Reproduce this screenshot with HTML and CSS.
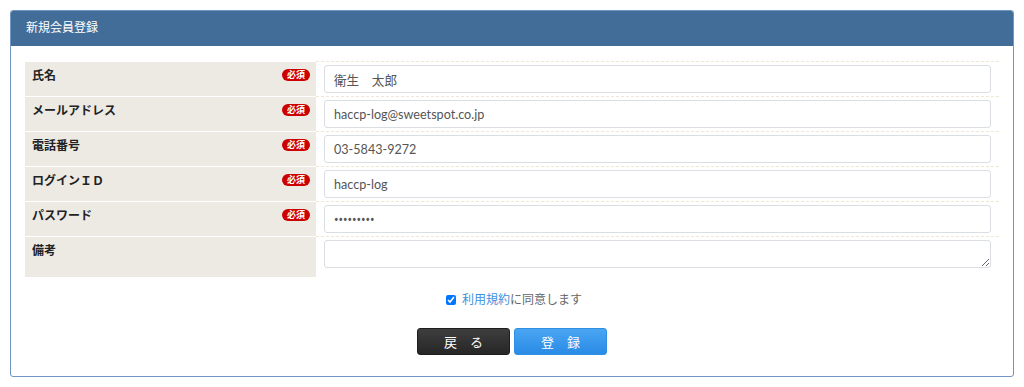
FILE: index.html
```html
<!DOCTYPE html>
<html lang="ja">
<head>
    <meta charset="UTF-8">
    <meta name="viewport" content="width=device-width, initial-scale=1.0">
    <title>新規会員登録</title>
    <link rel="stylesheet" href="styles.css">
</head>
<body>

    <div class="panel">
        <div class="panel-heading">新規会員登録</div>
        <div class="panel-body">
            <table class="form-table">
                <tr>
                    <th><span class="label">氏名</span><span class="required">必須</span></th>
                    <td><input type="text" class="form-control" value="衛生　太郎"></td>
                </tr>
                <tr>
                    <th><span class="label">メールアドレス</span><span class="required">必須</span></th>
                    <td><input type="text" class="form-control" value="haccp-log@sweetspot.co.jp"></td>
                </tr>
                <tr>
                    <th><span class="label">電話番号</span><span class="required">必須</span></th>
                    <td><input type="text" class="form-control" value="03-5843-9272"></td>
                </tr>
                <tr>
                    <th><span class="label">ログインＩＤ</span><span class="required">必須</span></th>
                    <td><input type="text" class="form-control" value="haccp-log"></td>
                </tr>
                <tr>
                    <th><span class="label">パスワード</span><span class="required">必須</span></th>
                    <td><input type="password" class="form-control pass" value="password1"></td>
                </tr>
                <tr class="remarks">
                    <th><span class="label">備考</span></th>
                    <td><textarea class="form-control" rows="1"></textarea></td>
                </tr>
            </table>

            <div class="agree">
                <label><input type="checkbox" checked><a href="#">利用規約</a>に同意します</label>
            </div>

            <div class="buttons">
                <button class="btn btn-back">戻　る</button>
                <button class="btn btn-submit">登　録</button>
            </div>
        </div>
    </div>

</body>
</html>
```

FILE: styles.css
```css
html {
    box-sizing: border-box;
}
*, *:before, *:after {
    box-sizing: inherit;
}
body {
    margin: 10px;
    font-family: "Noto Sans", "Noto Sans CJK JP", sans-serif;
    font-size: 12px;
    color: #333;
    background: #fff;
}
.panel {
    border: 1px solid #7196c1;
    border-radius: 3px;
    overflow: hidden;
}
.panel-heading {
    height: 35px;
    padding: 0 15px;
    line-height: 34px;
    color: #fff;
    font-size: 12px;
    background: #436d99;
}
.panel-body {
    padding: 15px 14px 21px;
}
/* Form table */
.form-table {
    width: 100%;
    border-collapse: collapse;
}
.form-table th {
    width: 291px;
    padding: 5px 6px 0 7px;
    text-align: left;
    vertical-align: top;
    background: #edeae3;
    border-top: 1px solid #fff;
}
.form-table tr:first-child th {
    border-top: 0;
}
.form-table th .label {
    font-weight: bold;
    font-size: 12px;
    line-height: 17px;
    color: #222;
}
.required {
    float: right;
    margin-top: 2px;
    width: 28px;
    height: 12px;
    line-height: 12px;
    border-radius: 6px;
    background: #cc0000;
    color: #fff;
    font-size: 9px;
    font-weight: bold;
    text-align: center;
}
.form-table td {
    padding: 3px 8px 3px 8px;
    border-top: 1px dashed #efe7d4;
}
.form-control {
    display: block;
    width: 100%;
    height: 28px;
    padding: 0 9px;
    font-family: "Lato", "Noto Sans CJK JP", sans-serif;
    font-size: 12.6px;
    color: #555;
    border: 1px solid #dadde2;
    border-radius: 3px;
    background: #fff;
}
.form-control.pass {
    font-family: "Noto Sans", sans-serif;
    font-size: 12px;
}
textarea.form-control {
    height: 28px;
    resize: vertical;
}
.remarks th {
    height: 40px;
}
.remarks td {
    padding-bottom: 8px;
}
/* Agreement */
.agree {
    margin-top: 13px;
    text-align: center;
    color: #666;
    font-size: 12px;
}
.agree input {
    width: 10px;
    height: 10px;
    margin: 0 6px 0 4px;
    vertical-align: -1px;
}
.agree a {
    color: #3d8fdd;
    text-decoration: none;
}
/* Buttons */
.buttons {
    margin-top: 20px;
    display: flex;
    justify-content: center;
    gap: 4px;
}
.btn {
    width: 93px;
    height: 27px;
    border-radius: 3px;
    font-family: inherit;
    font-size: 13px;
    color: #fff;
    cursor: pointer;
}
.btn-back {
    background: linear-gradient(#3e3e3e, #262626);
    border: 1px solid #1e1e1e;
}
.btn-submit {
    background: linear-gradient(#4aa5f2, #2a8be6);
    border: 1px solid #2f8fe4;
}
```
